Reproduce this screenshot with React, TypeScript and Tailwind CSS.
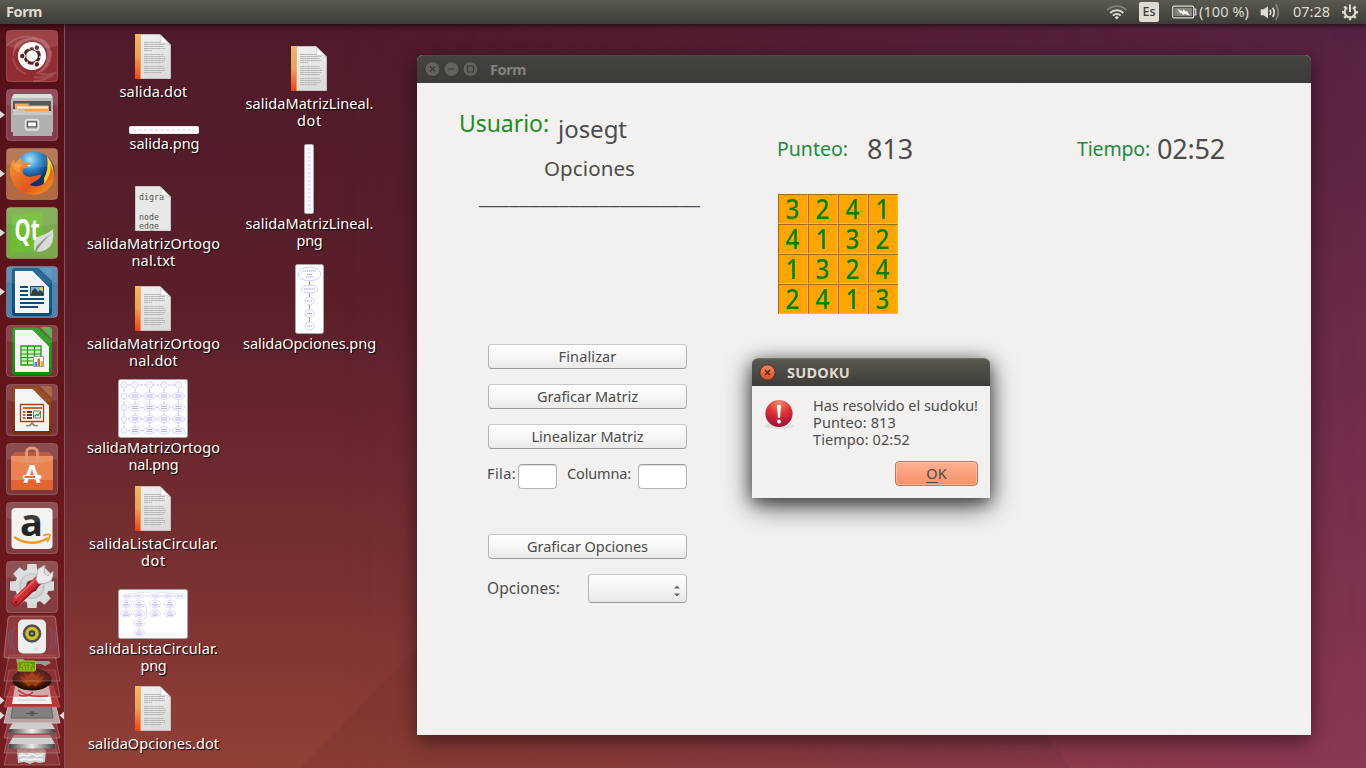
import { useLayoutEffect, useRef, type ReactNode } from "react";

/** One line of text whose letter spacing is adjusted to fill a given advance width. */
function Fit({ w, className = "", children }: { w: number; className?: string; children: string }) {
  const ref = useRef<HTMLSpanElement>(null);
  useLayoutEffect(() => {
    const el = ref.current;
    if (!el) return;
    el.style.letterSpacing = "0px";
    const natural = el.getBoundingClientRect().width;
    el.style.letterSpacing = `${(w - natural) / children.length}px`;
  }, [w, children]);
  return (
    <span ref={ref} className={`inline-block w-max whitespace-nowrap ${className}`}>
      {children}
    </span>
  );
}

/* ---------- top panel ---------- */

function Wifi() {
  return (
    <svg className="h-6 w-6" viewBox="0 0 24 24" fill="none" strokeWidth="1.9">
      <path d="M2 10.200a13.700 13.700 0 0 1 19.500 0" stroke="#85827a" />
      <path d="M5.200 13a9.300 9.300 0 0 1 13.200 0" stroke="#dfdbd2" />
      <path d="M7.900 15.600a5.500 5.500 0 0 1 7.800 0" stroke="#dfdbd2" />
      <path d="M9.600 17.200a3.200 3.200 0 0 1 4.400 0l-2.200 2.200z" fill="#dfdbd2" />
    </svg>
  );
}

function Battery() {
  return (
    <svg className="h-6 w-[25px]" viewBox="0 0 25 24">
      <rect x="0.7" y="6.2" width="21" height="11.6" rx="1.4" fill="none" stroke="#dfdbd2" strokeWidth="1.2" />
      <path d="M22.3 9.2h1.5v5.6h-1.5" fill="none" stroke="#dfdbd2" strokeWidth="1.2" />
      <rect x="2.4" y="8" width="17.6" height="8" fill="#85837c" />
      <path d="M5.500 9l5.500 2.200 0-2.200 3 2.500 1-.6 3 4.900-6-2 .2 1.800-3-2.500-1 .4z" fill="#f3f0e8" />
    </svg>
  );
}

function Speaker() {
  return (
    <svg className="h-6 w-5" viewBox="0 0 20 24" fill="none">
      <path d="M0.7 9.300h3L8 6.200v12.200l-4.300-3.100h-3z" fill="#dfdbd2" />
      <path d="M9.800 9.700q1.900 2.600 0 5.200" stroke="#dfdbd2" strokeWidth="1.7" />
      <path d="M12.700 7.700q3.100 4.600 0 9.200" stroke="#dfdbd2" strokeWidth="1.7" />
      <path d="M15.800 4.500q5 7.800 0 15.600" stroke="#85827a" strokeWidth="1.7" />
    </svg>
  );
}

function PowerGear() {
  return (
    <svg className="h-6 w-[18px]" viewBox="0 0 18 24" fill="none" stroke="#dfdbd2">
      <path d="M6.300 7.500a5.300 5.300 0 1 0 5.400 0" strokeWidth="2" />
      <path d="M9 4.500v7.500" strokeWidth="2" />
      <g strokeWidth="2.400">
        <path d="M1 12.200h2.600M14.400 12.200H17M9 17.500v2.700M3.300 6.500l1.700 1.700M14.700 6.500l-1.700 1.700M3.300 17.900l1.700-1.700M14.700 17.900l-1.700-1.700" />
      </g>
    </svg>
  );
}

function TopPanel() {
  return (
    <header className="relative z-20 flex h-6 w-full items-center bg-linear-to-b from-[#5b594f] to-[#3d3c38] pl-1.5 text-[14.5px] text-[#dfdbd2] shadow-[0_1px_6px_rgba(0,0,0,0.7)]">
      <Fit w={36} className="-mt-[2px] font-bold leading-6">Form</Fit>
      <div className="ml-auto flex h-6 items-center">
        <div className="mr-px w-[33px]"><Wifi /></div>
        <div className="flex h-5 w-5 items-center justify-center rounded-[2px] bg-[#dfdbd2] text-[12.5px] font-medium leading-5 text-[#3c3b37]">
          <Fit w={13}>Es</Fit>
        </div>
        <div className="ml-[13px]"><Battery /></div>
        <Fit w={50} className="-mt-[2px] ml-[2px] leading-6">(100 %)</Fit>
        <div className="ml-[11px]"><Speaker /></div>
        <Fit w={37} className="-mt-[2px] ml-[13px] leading-6">07:28</Fit>
        <div className="ml-[11px] mr-[7px]"><PowerGear /></div>
      </div>
    </header>
  );
}

/* ---------- launcher ---------- */

function Tile({ fill, running = false, children }: { fill: string; running?: boolean; children: ReactNode }) {
  return (
    <svg className="mb-[7px] block h-[52px] w-16 overflow-visible" viewBox="-6 0 64 52">
      <rect x="0.500" y="0.500" width="51" height="51" rx="3.500" fill={fill} stroke="#fff" strokeOpacity="0.220" />
      {children}
      <path d="M1 4q0-3 3-3h44q3 0 3 3v12Q26 24 1 16z" fill="#fff" opacity="0.100" />
      {running && <path d="M-6 22l5 3.700-5 3.700z" fill="#dcd9d9" />}
    </svg>
  );
}

function OfficePage({ dark, mid, light, children }: { dark: string; mid: string; light: string; children: ReactNode }) {
  return (
    <>
      <path d="M9 2h23l14 13v31q0 4-4 4H9q-3 0-3-3V5q0-3 3-3z" fill={dark} />
      <path d="M7.500 3h24l14 13v26H7.500z" fill={mid} opacity="0.450" />
      <path d="M34 2h9q3 0 3 3v9z" fill={light} />
      <path d="M9 5h17.500L43 21.500V47H9z" fill="#f4f4f4" />
      {children}
    </>
  );
}

function GearShape() {
  const teeth = [0, 45, 90, 135, 180, 225, 270, 315];
  return (
    <g>
      {teeth.map((a) => (
        <path key={a} d="M20.500 12l1-9h9l1 9z" fill="#d9dadb" transform={`rotate(${a} 26 25)`} />
      ))}
      <circle cx="26" cy="25" r="17" fill="#dcddde" />
      <circle cx="26" cy="25" r="13" fill="#c2c3c5" />
      <circle cx="26" cy="25" r="11" fill="#d2d3d5" />
      <circle cx="26" cy="25" r="6" fill="#7b2426" />
    </g>
  );
}

function FoldedStack() {
  const slab = (y: number, h: number, fill: string, o = 1) => (
    <path d={`M9 ${y}h46l5 ${h}H4z`} fill={fill} fillOpacity={o} stroke="#fff" strokeOpacity="0.280" strokeWidth="0.800" />
  );
  return (
    <svg className="-mt-[7px] block h-[155px] w-16" viewBox="0 9 64 155">
      <defs>
        <linearGradient id="drive" x1="0" x2="1">
          <stop offset="0" stopColor="#444" /><stop offset="0.500" stopColor="#eee" /><stop offset="1" stopColor="#444" />
        </linearGradient>
        <radialGradient id="fire">
          <stop offset="0" stopColor="#a03c09" /><stop offset="0.550" stopColor="#5e1e07" /><stop offset="1" stopColor="#120a06" />
        </radialGradient>
      </defs>
      {slab(140, 21, "#a05050", 0.5)}
      <path d="M17 145l4-1 5 1 5-2 5 2 5-1 5 2-1 12-5 1-5-1-5 2-6-2-6 1z" fill="#c9cccb" />
      <path d="M19 148l3 1 3-2 4 2 4-2 4 2 4-1 4 1M19 152l5-1 4 1 4-2 5 2 6-1M20 156l5-1 5 1 5-1 8 1" stroke="#eef0ee" strokeWidth="1.800" fill="none" />
      {slab(128, 21, "#9e5153", 0.6)}
      <path d="M14 131h36l5 9H9z" fill="#d0d0d0" /><path d="M9 140h46v4.500H9z" fill="url(#drive)" />
      {slab(114, 20, "#9e5153", 0.6)}
      <path d="M14 117h36l5 8H9z" fill="#cccccc" /><path d="M9 125h46v4.500H9z" fill="url(#drive)" />
      <path d="M8 103h48l4 16H4z" fill="#b7a3a3" stroke="#d5c3c3" />
      <path d="M13 102h38l2 12H11z" fill="#808080" stroke="#606060" />
      <path d="M26 109.500h12M32 107v5M30 108h4v3h-4z" stroke="#555" fill="none" strokeWidth="0.900" />
      <path d="M11 82h42l7 21H4z" fill="#b53637" stroke="#d65b5b" strokeWidth="0.700" />
      <path d="M15 82h34l3 18H12z" fill="#f1f1f1" />
      <path d="M18 86q8 8 30 6M19 91q8 3 14-3" stroke="#dc1f2f" strokeWidth="1.600" fill="none" />
      <path d="M18 96h28" stroke="#c9c9c9" />
      {slab(66, 27, "#a53f40", 0.4)}
      <ellipse cx="32" cy="75.500" rx="19.700" ry="11" fill="url(#fire)" />
      <path d="M20 71q5 5 12 4 7 1 12-4l-3 7q-4 2-5 5l-4-3-4 3q-1-3-5-5z" fill="#c5530e" opacity="0.500" />
      <path d="M24 68l3 4 5-4 5 4 3-4-3 8H27z" fill="#a33b0a" />
      {slab(51, 26, "#a24545", 0.35)}
      <path d="M16 55h7l2 2h24l2 2-6 3-4-2H28l-5 4-5-3h6l-7-2z" fill="#989b98" />
      <rect x="18" y="57" width="17.500" height="10" rx="1" fill="#6d9610" stroke="#a7cc1b" />
      <path d="M20 65h14M22 60h9v3h-9z" stroke="#b7d61e" strokeDasharray="2 1" fill="none" />
      <path d="M11 12h42q2 0 2.500 2l4 38q0 2-2 2H6q-2 0-2-2l4-38q.5-2 3-2z" fill="#b45a5b" fillOpacity="0.500" stroke="#fff" strokeOpacity="0.300" />
      <path d="M15 23q-7 11 0 24M11 25q-5 9 0 20M49 23q7 11 0 24M53 25q5 9 0 20" stroke="#566fa3" strokeOpacity="0.400" fill="none" strokeWidth="1.500" />
      <rect x="18" y="15.500" width="28" height="34" rx="5" fill="#eceeed" />
      <circle cx="32" cy="29.500" r="9.300" fill="#4e5154" />
      <circle cx="32" cy="29.500" r="6.700" fill="#d7bb24" />
      <circle cx="32" cy="29.500" r="3.300" fill="#34414f" />
      <circle cx="32" cy="29.500" r="1.300" fill="#91a0a5" />
      <circle cx="36" cy="45" r="2" fill="#dadddc" />
      <path d="M0 92.500l4.500 4-4.500 4zM0 107.500l4.500 4-4.500 4zM64 107.500l-4.500 4 4.500 4z" fill="#dcd9d9" />
    </svg>
  );
}

function Launcher() {
  return (
    <nav className="flex h-[744px] w-[65px] flex-col overflow-hidden border-r border-[#84525b] bg-linear-to-b from-[#54101a] via-[#63151b] to-[#751d20] pt-1.5">
      <Tile fill="#922d33">
        <path d="M7 28Q5 11 22 8 42 5 45 22 44 38 31 43 43 35 41 20 35 7 20 11 9 14 7 28z" fill="#fff" opacity="0.220" />
        <path d="M20 44Q9 40 7 28M45 21q1 15-13 22 10 3 17 0-8 6-21 4M1 15Q14 3 30 8M27 51q14 0 23-9" stroke="#fff" strokeOpacity="0.140" strokeWidth="2" fill="none" />
        <circle cx="26" cy="26" r="14" fill="#fff" />
        <circle cx="26" cy="26" r="7.300" fill="none" stroke="#5c1d21" strokeWidth="3" />
        {[180, 300, 60].map((a) => (
          <g key={a} transform={`rotate(${a} 26 26)`}>
            <circle cx="35.500" cy="26" r="3.100" fill="#fff" />
            <circle cx="35.700" cy="26" r="2.200" fill="#5c1d21" />
            <path d="M31 21l4-6" stroke="#fff" strokeWidth="1.300" transform="rotate(114 26 26)" />
          </g>
        ))}
      </Tile>
      <Tile fill="#873a4b" running>
        <path d="M8 5h37l2 6v32H5V11z" fill="#b4b5b3" />
        <path d="M8 5h37l2 4H5.500z" fill="#dadbd9" />
        <path d="M7 12h38v10H7z" fill="#464745" />
        <path d="M9 14h14l1 2h18v7H9z" fill="#d7562e" />
        <path d="M9 15h13l1 2h20v7H9z" fill="#f4a250" />
        <path d="M11 17.500h31v2H11z" fill="#fff1da" />
        <path d="M6 20h12l1.500 2H46v25H7z" fill="#b0b1af" />
        <path d="M7 20.500h11l1.500 2H46V26H7z" fill="#c9cac8" />
        <rect x="19.500" y="30.500" width="13" height="10.500" rx="2.500" fill="#b9bab8" stroke="#e3e4e2" strokeWidth="1.500" />
        <rect x="21.500" y="32.800" width="9" height="5" fill="#f5f5f5" stroke="#4c4d4b" strokeWidth="1.100" />
      </Tile>
      <Tile fill="#b06b41" running>
        <defs>
          <radialGradient id="globe" cx="0.400" cy="0.200"><stop offset="0" stopColor="#a7e2f8" /><stop offset="0.450" stopColor="#2d8fd3" /><stop offset="1" stopColor="#12306d" /></radialGradient>
          <linearGradient id="fox" x1="0" x2="1" y2="1"><stop offset="0" stopColor="#f59a2e" /><stop offset="0.600" stopColor="#e4571f" /><stop offset="1" stopColor="#f3a31d" /></linearGradient>
        </defs>
        <circle cx="28" cy="24" r="20.500" fill="url(#globe)" />
        <path d="M41 8q9 11 6 24-3 9-13 13 5-7 4-15 5-8 3-22z" fill="#f8d332" />
        <path d="M44 16q9 17-4 27-13 8-25 0Q3 35 4 20q2-7 4-9l1 4 6-6q0 4 3 6l6-.5q0 4-6 6-3 3 0 6 3 3 8 2l9-2q1 3-6 7-7 3-4 4 13 3 17-8 4-7 2-13z" fill="url(#fox)" />
        <path d="M15 16q-3 5 1 9-7-1-9-7 3-4 8-2z" fill="#f9b04b" opacity="0.600" />
        <path d="M21 17h4l-2 2z" fill="#ffefd8" />
      </Tile>
      <Tile fill="#78a94a" running>
        <path d="M6 8l30-3 1 38-32 3z" fill="#6fbe32" />
        <text x="0" y="0" fontSize="30" fontWeight="700" fill="#fff" fontFamily="Open Sans, sans-serif" transform="translate(8.500 34) scale(0.680 1)">Qt</text>
        <path d="M29 45q-4-12 5-16 9-3 13-7 2 15-6 20-6 4-11 2z" fill="#d9dbd8" />
        <path d="M29 46q8-12 17-20-9 6-16 14z" fill="#8c928a" />
      </Tile>
      <Tile fill="#4f83aa" running>
        <OfficePage dark="#0c4c7c" mid="#1f6d9f" light="#4c93bd">
          <path d="M14 21h8M14 25h8M14 29h8M14 33h24M14 37h24M14 41h18" stroke="#0d4c78" strokeWidth="1.900" />
          <path d="M24.500 20.500h13v9h-13z" fill="#7cb5e4" stroke="#1d527b" />
          <path d="M25 29l1-4 3-3 3 4 2-2 3.500 3v2z" fill="#37393a" />
          <circle cx="35.500" cy="22.800" r="1.700" fill="#f0ce3a" />
        </OfficePage>
      </Tile>
      <Tile fill="#7b3137">
        <OfficePage dark="#1a8511" mid="#35ab25" light="#51a63f">
          <path d="M15 21h20v19H15z" fill="#cef3c0" stroke="#27951c" strokeWidth="1.300" />
          <path d="M15 25h20M15 29h20M15 32.500h20M15 36h20M21.500 21v19M28.500 21v19" stroke="#27951c" strokeWidth="1.200" />
          <path d="M27.500 31.500h10v10h-10z" fill="#fff" stroke="#999" />
          <path d="M28.500 37h2.500v4h-2.500z" fill="#2798df" /><path d="M31.500 33.500H34V41h-2.500z" fill="#d96920" /><path d="M34.500 36H37v5h-2.500z" fill="#eab43a" />
        </OfficePage>
      </Tile>
      <Tile fill="#7b3439">
        <OfficePage dark="#7b2e0c" mid="#a5501c" light="#a5572e">
          <path d="M14.500 20.500h23v17h-23z" fill="#fff4e9" stroke="#9a4620" strokeWidth="1.300" />
          <path d="M17 24h19" stroke="#d36427" strokeWidth="2" />
          <path d="M17 28h2.500M17 31h2.500M17 34h2.500" stroke="#d36427" strokeWidth="1.800" />
          <path d="M21 28h5M21 31h5M21 34h5" stroke="#773114" strokeWidth="1.800" />
          <path d="M27.500 27h7v7h-7z" fill="#eee" stroke="#777" />
          <path d="M28.500 32.500l2-2 1.500 1 2-3" stroke="#26953b" strokeWidth="1.200" fill="none" />
          <path d="M26 38v2M20 41.500q5 1 6-3 1 4 6 3" stroke="#888" strokeWidth="1.500" fill="none" />
        </OfficePage>
      </Tile>
      <Tile fill="#7d383c">
        <path d="M5 14l4-4h34l4 4v33H5z" fill="#df6639" />
        <path d="M5 13h42v24H5z" fill="#e98451" /><path d="M5 37h42v10H5z" fill="#e36332" />
        <path d="M9 9h34l4 4H5z" fill="#b64a2b" />
        <path d="M20.500 18V10q0-5 5.500-5t5.500 5v8" fill="none" stroke="#dc8d75" strokeWidth="2.800" />
        <text x="26" y="40" textAnchor="middle" fontSize="25" fontWeight="700" fontFamily="Liberation Sans, sans-serif" fill="#fff">A</text>
        <path d="M18.500 34h15" stroke="#fff" strokeWidth="4" strokeLinecap="round" />
        <path d="M18.500 34h10.500" stroke="#e45b2b" strokeWidth="1.800" />
      </Tile>
      <Tile fill="#803d40">
        <rect x="5.500" y="6" width="41" height="41" rx="4" fill="#f2f2f2" />
        <text x="25.500" y="34" textAnchor="middle" fontSize="38" fontWeight="700" fontFamily="Open Sans, sans-serif" fill="#252525">a</text>
        <path d="M8 35q17 11 34 1" stroke="#f7981d" strokeWidth="2.500" fill="none" />
        <path d="M37 33.500q6-2 7-.5-.2 4-3 7" stroke="#f7981d" strokeWidth="1.800" fill="none" />
      </Tile>
      <Tile fill="#843e42">
        <GearShape />
        <path d="M10 41L32 20" stroke="#9a1920" strokeWidth="9" strokeLinecap="round" />
        <path d="M10 40L31 19" stroke="#cc2d33" strokeWidth="7" strokeLinecap="round" />
        <path d="M10 37L28 20" stroke="#e2696a" strokeWidth="1.700" strokeLinecap="round" />
        <path d="M30 19l2-11 7-4-1 8 4 3 5-5q1 11-7 12l-7 1z" fill="#e8e9e8" stroke="#97989a" strokeWidth="0.700" />
        <circle cx="10" cy="41.500" r="1.400" fill="#6c1417" />
      </Tile>
      <FoldedStack />
    </nav>
  );
}

/* ---------- desktop files ---------- */

function DocIcon() {
  return (
    <svg className="h-[45px] w-9" viewBox="0 0 36 45">
      <defs>
        <linearGradient id="spine" x2="0" y2="1"><stop offset="0" stopColor="#edb96a" /><stop offset="0.500" stopColor="#eda05a" /><stop offset="1" stopColor="#e9441a" /></linearGradient>
        <linearGradient id="sheet" x2="0.300" y2="1"><stop offset="0" stopColor="#f1f1f0" /><stop offset="1" stopColor="#dcdcdb" /></linearGradient>
      </defs>
      <path d="M.5.500H25L35.500 11v33.500H.5z" fill="url(#sheet)" stroke="#c4c1bf" />
      <path d="M0 0h6v45H0z" fill="url(#spine)" />
      <path d="M5.500 0v45" stroke="#f3b68a" strokeOpacity="0.600" />
      <path d="M9 8.500h17M9 10.500h21M9 12.500h20M9 14.500h21M9 16.500h8M9 20.500h20M9 22.500h21M9 24.500h22M9 26.500h21M9 28.500h20M9 32.500h20M9 34.500h21M9 36.500h21M9 38.500h17" stroke="#b0b0b0" strokeWidth="0.900" strokeDasharray="4 .3 2 .3" />
      <path d="M25 .5L35.500 11q-5-3-10-1.500Q27 5 25 .5z" fill="#fff" stroke="#bcbcbb" strokeWidth="0.600" />
    </svg>
  );
}

function TextIcon() {
  return (
    <svg className="h-[45px] w-9" viewBox="0 0 36 45">
      <path d="M.5.500H25L35.500 11v33.500H.5z" fill="#e8e8e7" stroke="#c9c9c8" />
      <g fontFamily="DejaVu Sans Mono, monospace" fontSize="8.300" fill="#555">
        <text x="4" y="14">digra</text><text x="4" y="33.500">node</text><text x="4" y="43">edge</text>
      </g>
      <path d="M1 42.700h34v1.800H1z" fill="#e0e0df" />
      <path d="M25 .5L35.500 11q-5-2.500-9-1.500Q27.500 5 25 .5z" fill="#fff" stroke="#bbb" strokeWidth="0.600" />
    </svg>
  );
}

function StripH() {
  return (
    <svg className="h-2 w-[70px]" viewBox="0 0 70 8">
      <rect width="70" height="8" rx="2" fill="#fdfdfd" stroke="#aaa" strokeWidth="0.500" />
      <path d="M4 4h62" stroke="#ece3f6" strokeWidth="2" strokeDasharray="3 2.500" />
    </svg>
  );
}

function StripV() {
  return (
    <svg className="h-[70px] w-[10px]" viewBox="0 0 10 70">
      <rect x="0.300" y="0.300" width="9.400" height="69.400" rx="2" fill="#fdfdfd" stroke="#999" strokeWidth="0.600" />
      <path d="M5 4v62" stroke="#e2e1fc" strokeWidth="3" strokeDasharray="2.500 1.500" />
    </svg>
  );
}

function ChainThumb() {
  const nodes = [37, 49.500, 62];
  return (
    <svg className="h-[70px] w-[29px]" viewBox="0 0 29 70">
      <rect x="0.500" y="0.500" width="28" height="69" rx="2" fill="#fff" stroke="#a9a5a0" />
      <g fill="none" stroke="#bdbaf5" strokeWidth="0.700">
        <ellipse cx="14.500" cy="10" rx="11.300" ry="6.800" /><ellipse cx="14.500" cy="25" rx="8.500" ry="4" />
        {nodes.map((y) => <ellipse key={y} cx="14.500" cy={y} rx="4.500" ry="4" />)}
      </g>
      <path d="M8 7h13M12 10.500h5M11 13h7M9 25h11M12 37h5M12 49.500h5M12 62h5" stroke="#a5a3ee" strokeWidth="1" strokeDasharray="1.500 .5" />
      <path d="M14.500 17v4M14.500 29v4M14.500 41v4.500M14.500 53.500V58" stroke="#777" strokeWidth="0.700" />
    </svg>
  );
}

function MatrixThumb() {
  const rows = [17, 28.500, 40, 51.500];
  const cols = [17, 31.500, 46, 60.500];
  return (
    <svg className="h-[59px] w-[70px]" viewBox="0 0 70 59">
      <rect x="0.500" y="0.500" width="69" height="58" rx="2" fill="#fdfdff" stroke="#aaa7a3" />
      <path d="M6 6h54M6 6v46M6 17h54M6 28.500h54M6 40h54M6 51.500h54M17 6v46M31.500 6v46M46 6v46M60.500 6v46" stroke="#999" strokeWidth="0.500" strokeDasharray="3 1" />
      <g fill="#f7f6ff" stroke="#cccaf5" strokeWidth="0.600">
        {[6, ...cols].map((x) => <circle key={x} cx={x} cy="6" r="3.200" />)}
        {rows.map((y) => <circle key={y} cx="6" cy={y} r="2.900" />)}
        {rows.flatMap((y) => cols.map((x) => <ellipse key={`${x}-${y}`} cx={x} cy={y} rx="6" ry="3.500" />))}
      </g>
      {rows.map((y) => <path key={y} d={`M14 ${y - 1}h6m8.500 0h6m8.500 0h6m8.500 0h6M14 ${y + 1}h6m8.500 0h6m8.500 0h6m8.500 0h6`} stroke="#b9b7f0" strokeWidth="1" />)}
    </svg>
  );
}

function ListThumb() {
  const nodes = [[8, 15], [8, 24.500], [21, 15], [21, 24.500], [21, 34], [21, 43.500], [37, 15], [37, 24.500], [52, 15], [52, 24.500]];
  return (
    <svg className="h-[50px] w-[70px]" viewBox="0 0 70 50">
      <rect x="0.500" y="0.500" width="69" height="49" rx="2" fill="#fff" stroke="#aaa7a3" />
      <path d="M9 7h53M21 10v31M37 10v13M52 10v13M8 10v13M27 16q4 8-1 15" fill="none" stroke="#aaa" strokeWidth="0.400" />
      <path d="M10 5Q35 1 60 5" fill="none" stroke="#d5d5d5" strokeWidth="0.500" />
      <g fill="#faf8ff" stroke="#d8d1f7" strokeWidth="0.600">
        {[9, 20, 37, 50, 62].map((x) => <ellipse key={x} cx={x} cy="7" rx="5" ry="2.200" />)}
        {nodes.map(([x, y]) => <ellipse key={`${x}-${y}`} cx={x} cy={y} rx="5.700" ry="3.600" />)}
      </g>
      {nodes.map(([x, y]) => <path key={`${x}-${y}`} d={`M${x - 2} ${y - 1.500}h4m-5.500 2h7m-6 1.500h5`} stroke="#c5bcf5" strokeWidth="0.900" />)}
      <path d="M6 7h6M17 7h6M34 7h6M47 7h6M59 7h6" stroke="#c5bcf5" />
    </svg>
  );
}

function DesktopFile({ place, icon, lines, thumb = false }: { place: string; icon: ReactNode; lines: [string, number][]; thumb?: boolean }) {
  return (
    <div className={`absolute flex w-[140px] flex-col items-center ${thumb ? "gap-px" : "gap-1"} ${place}`}>
      <div className="flex justify-center">{icon}</div>
      <div className="flex flex-col items-center pl-px text-[14.5px] leading-[17px] text-white [text-shadow:1px_1px_1px_#000]">
        {lines.map(([t, w]) => <Fit key={t} w={w}>{t}</Fit>)}
      </div>
    </div>
  );
}

function DesktopFiles() {
  return (
    <>
      <DesktopFile place="left-[83px] top-[34px]" icon={<DocIcon />} lines={[["salida.dot", 68]]} />
      <DesktopFile thumb place="left-[94px] top-[126px]" icon={<StripH />} lines={[["salida.png", 70]]} />
      <DesktopFile place="left-[83px] top-[186px]" icon={<TextIcon />} lines={[["salidaMatrizOrtogo", 133], ["nal.txt", 44]]} />
      <DesktopFile place="left-[83px] top-[286px]" icon={<DocIcon />} lines={[["salidaMatrizOrtogo", 133], ["nal.dot", 49]]} />
      <DesktopFile thumb place="left-[83px] top-[379px]" icon={<MatrixThumb />} lines={[["salidaMatrizOrtogo", 133], ["nal.png", 50]]} />
      <DesktopFile place="left-[83px] top-[486px]" icon={<DocIcon />} lines={[["salidaListaCircular.", 129], ["dot", 25]]} />
      <DesktopFile thumb place="left-[83px] top-[589px]" icon={<ListThumb />} lines={[["salidaListaCircular.", 129], ["png", 26]]} />
      <DesktopFile place="left-[83px] top-[686px]" icon={<DocIcon />} lines={[["salidaOpciones.dot", 131]]} />
      <DesktopFile place="left-[239px] top-[46px]" icon={<DocIcon />} lines={[["salidaMatrizLineal.", 128], ["dot", 25]]} />
      <DesktopFile thumb place="left-[239px] top-[144px]" icon={<StripV />} lines={[["salidaMatrizLineal.", 128], ["png", 26]]} />
      <DesktopFile thumb place="left-[239px] top-[264px]" icon={<ChainThumb />} lines={[["salidaOpciones.png", 133]]} />
    </>
  );
}

/* ---------- form window ---------- */

function WindowButtons() {
  return (
    <svg className="h-4 w-[56px]" viewBox="0 0 56 16" fill="none" stroke="#3b3a36">
      <g fill="#62615b" stroke="#34332f" strokeWidth="0.800">
        <circle cx="8.500" cy="8" r="7.500" /><circle cx="27.500" cy="8" r="7.500" /><circle cx="46.500" cy="8" r="7.500" />
      </g>
      <path d="M6 5.500l5 5m0-5l-5 5M24 8h7" strokeWidth="1.200" />
      <path d="M43.500 5h6v6h-6z" strokeWidth="1.200" />
    </svg>
  );
}

function PushButton({ w, className = "", children }: { w: number; className?: string; children: string }) {
  return (
    <button className={`flex h-[25px] w-[199px] items-center justify-center rounded-[4px] border border-[#b6b3ae] border-t-[#cbc8c4] border-b-[#9c9994] bg-linear-to-b from-white via-[#f7f7f6] to-[#eae9e7] ${className}`}>
      <Fit w={w}>{children}</Fit>
    </button>
  );
}

function LineEdit({ className }: { className: string }) {
  return <div className={`h-[25px] rounded-[4px] border border-[#b8b5b0] border-t-[#9c9994] bg-white shadow-[inset_0_1px_1px_#ddd] ${className}`} />;
}

const grid = [[3, 2, 4, 1], [4, 1, 3, 2], [1, 3, 2, 4], [2, 4, 1, 3]];

function FormWindow() {
  return (
    <section className="absolute left-[417px] top-[55px] flex h-[680px] w-[894px] flex-col rounded-t-[6px] bg-[#f2f1f0] text-[14.5px] text-[#4c4c4c] shadow-[0_6px_20px_rgba(0,0,0,0.5)]">
      <div className="flex h-7 items-center rounded-t-[6px] border-t border-[#4d4c48] bg-linear-to-b from-[#44433f] to-[#3c3b37] pl-[7px] pb-px">
        <WindowButtons />
        <Fit w={36} className="ml-[10px] font-bold leading-6 text-[#84827c]">Form</Fit>
      </div>
      <div className="flex">
        <div className="flex w-[360px] flex-col">
          <div className="flex items-start pl-[42px] pt-6">
            <Fit w={90} className="text-[23px] leading-8 text-[#228b22]">Usuario:</Fit>
            <Fit w={69} className="ml-[9px] mt-[6px] text-[24px] leading-8">josegt</Fit>
          </div>
          <div className="-mt-px flex h-[48px] flex-col pl-[127px]">
            <Fit w={91} className="text-[20.500px] leading-[49px]">Opciones</Fit>
          </div>
          <Fit w={221} className="-mt-[11px] ml-[62px] h-[31px] text-[22.500px] leading-[30px]">______________________</Fit>
          <div className="mt-[132px] ml-[71px] flex w-[199px] flex-col">
            <PushButton w={58}>Finalizar</PushButton>
            <PushButton w={101} className="mt-[15px]">Graficar Matriz</PushButton>
            <PushButton w={112} className="mt-[15px]">Linealizar Matriz</PushButton>
            <div className="-ml-px mt-[15px] flex items-start leading-[18px]">
              <Fit w={29}>Fila:</Fit>
              <LineEdit className="ml-[2px] w-[39px]" />
              <Fit w={64} className="ml-[10px]">Columna:</Fit>
              <LineEdit className="ml-auto w-[49px]" />
            </div>
            <PushButton w={121} className="mt-[45px]">Graficar Opciones</PushButton>
            <div className="-ml-px mt-[15px] flex items-center">
              <Fit w={73} className="text-[15.500px]">Opciones:</Fit>
              <div className="ml-auto flex h-[29px] w-[99px] items-center justify-end rounded-[4px] border border-[#b6b3ae] border-t-[#cbc8c4] border-b-[#9c9994] bg-linear-to-b from-white to-[#eae9e7] pr-[5px]">
                <svg className="mt-1 h-3 w-2" viewBox="0 0 8 12" fill="#666"><path d="M1 3.500L4 .5l3 3zM1 8.500l3 3 3-3z" /></svg>
              </div>
            </div>
          </div>
        </div>
        <div className="flex w-[300px] flex-col pt-[46px]">
          <div className="flex items-center leading-10">
            <Fit w={71} className="text-[19.500px] text-[#258a3d]">Punteo:</Fit>
            <Fit w={46} className="ml-[19px] text-[27px]">813</Fit>
          </div>
          <div className="ml-px mt-[25px] grid h-[120px] w-[120px] grid-cols-4 bg-[#ffa500] text-[27px] text-[#008000]">
            {grid.flat().map((n, i) => (
              <div key={i} className="flex h-[30px] items-center justify-center border border-t-[#a56c09] border-l-[#a56c09] border-r-[#ffbb3c] border-b-[#ffbb3c] font-medium leading-[26px]">
                <span className="inline-block scale-x-90">{n}</span>
              </div>
            ))}
          </div>
        </div>
        <div className="mt-[46px] flex h-10 items-center leading-10">
          <Fit w={73} className="text-[19.500px] text-[#258a3d]">Tiempo:</Fit>
          <Fit w={68} className="ml-[7px] text-[27px]">02:52</Fit>
        </div>
      </div>
    </section>
  );
}

/* ---------- message dialog ---------- */

function Dialog() {
  return (
    <section className="absolute left-[752px] top-[358px] flex h-[140px] w-[238px] flex-col rounded-t-[6px] bg-[#f2f1f0] text-[14.5px] text-[#4c4c4c] shadow-[0_8px_28px_rgba(0,0,0,0.6),0_4px_16px_rgba(0,0,0,0.5)]">
      <div className="flex h-7 items-center rounded-t-[6px] border-t border-[#75736a] bg-linear-to-b from-[#5a584f] to-[#3d3c38] pl-[7px]">
        <svg className="h-[17px] w-[17px]" viewBox="0 0 17 17">
          <defs><linearGradient id="close" x2="0" y2="1"><stop offset="0" stopColor="#f58462" /><stop offset="1" stopColor="#e14f20" /></linearGradient></defs>
          <circle cx="8.500" cy="8.500" r="7.700" fill="url(#close)" stroke="#40332c" />
          <path d="M6 6l5 5m0-5l-5 5" stroke="#38241d" strokeWidth="1.300" />
        </svg>
        <Fit w={63} className="-mt-[2px] ml-[11px] font-bold leading-6 text-[#dfdbd2]">SUDOKU</Fit>
      </div>
      <div className="flex pl-3 pt-[11px]">
        <svg className="mt-[2px] h-[30px] w-[30px]" viewBox="0 0 30 30">
          <defs><radialGradient id="alert" cx="0.500" cy="0.100" r="0.900"><stop offset="0" stopColor="#f18c72" /><stop offset="0.500" stopColor="#dd3032" /><stop offset="1" stopColor="#9a103f" /></radialGradient></defs>
          <ellipse cx="15" cy="27" rx="15" ry="3" fill="#000" opacity="0.070" />
          <circle cx="15" cy="14.500" r="13.600" fill="url(#alert)" />
          <path d="M13 6.500q2-1.500 4 0l-1 12.500h-2z" fill="#fff" /><circle cx="15" cy="22.500" r="2" fill="#fff" />
        </svg>
        <div className="ml-[19px] flex flex-col leading-[17px]">
          <Fit w={165}>Has resolvido el sudoku!</Fit>
          <Fit w={83}>Punteo: 813</Fit>
          <Fit w={97}>Tiempo: 02:52</Fit>
        </div>
      </div>
      <button className="ml-auto mr-3 mt-[13px] flex h-[25px] w-[83px] items-center justify-center rounded-[4px] border border-[#b47a63] bg-linear-to-b from-[#fdb092] to-[#f69067] shadow-[inset_0_0_0_1px_rgba(255,220,200,0.45)]">
        <span className="border-b border-[#4c4c4c] leading-[17px]">O</span><span className="border-b border-transparent leading-[17px]">K</span>
      </button>
    </section>
  );
}

function Wallpaper() {
  return (
    <svg className="absolute inset-0 h-full w-full" viewBox="0 0 1366 768" preserveAspectRatio="none">
      <defs>
        <linearGradient id="warm" x1="0" y1="0" x2="0" y2="1"><stop offset="0" stopColor="#4e1a29" /><stop offset="0.400" stopColor="#5b1f2b" /><stop offset="0.750" stopColor="#793032" /><stop offset="1" stopColor="#924036" /></linearGradient>
        <linearGradient id="cool" x1="0" y1="0" x2="0" y2="1"><stop offset="0" stopColor="#552141" /><stop offset="0.500" stopColor="#6e2c4c" /><stop offset="1" stopColor="#8b3853" /></linearGradient>
        <linearGradient id="fade"><stop offset="0.250" stopColor="#000" /><stop offset="1" stopColor="#fff" /></linearGradient>
        <mask id="side"><rect width="1366" height="768" fill="url(#fade)" /></mask>
      </defs>
      <rect width="1366" height="768" fill="url(#warm)" />
      <rect width="1366" height="768" fill="url(#cool)" mask="url(#side)" />
      <path d="M300 768L420 645h560l90 123z" fill="#000" opacity="0.050" />
    </svg>
  );
}

export default function App() {
  return (
    <main className="relative h-[768px] w-[1366px] overflow-hidden bg-[#5b1f2b] font-['Noto_Sans',sans-serif]">
      <Wallpaper />
      <TopPanel />
      <div className="relative"><Launcher /></div>
      <DesktopFiles />
      <FormWindow />
      <Dialog />
    </main>
  );
}
